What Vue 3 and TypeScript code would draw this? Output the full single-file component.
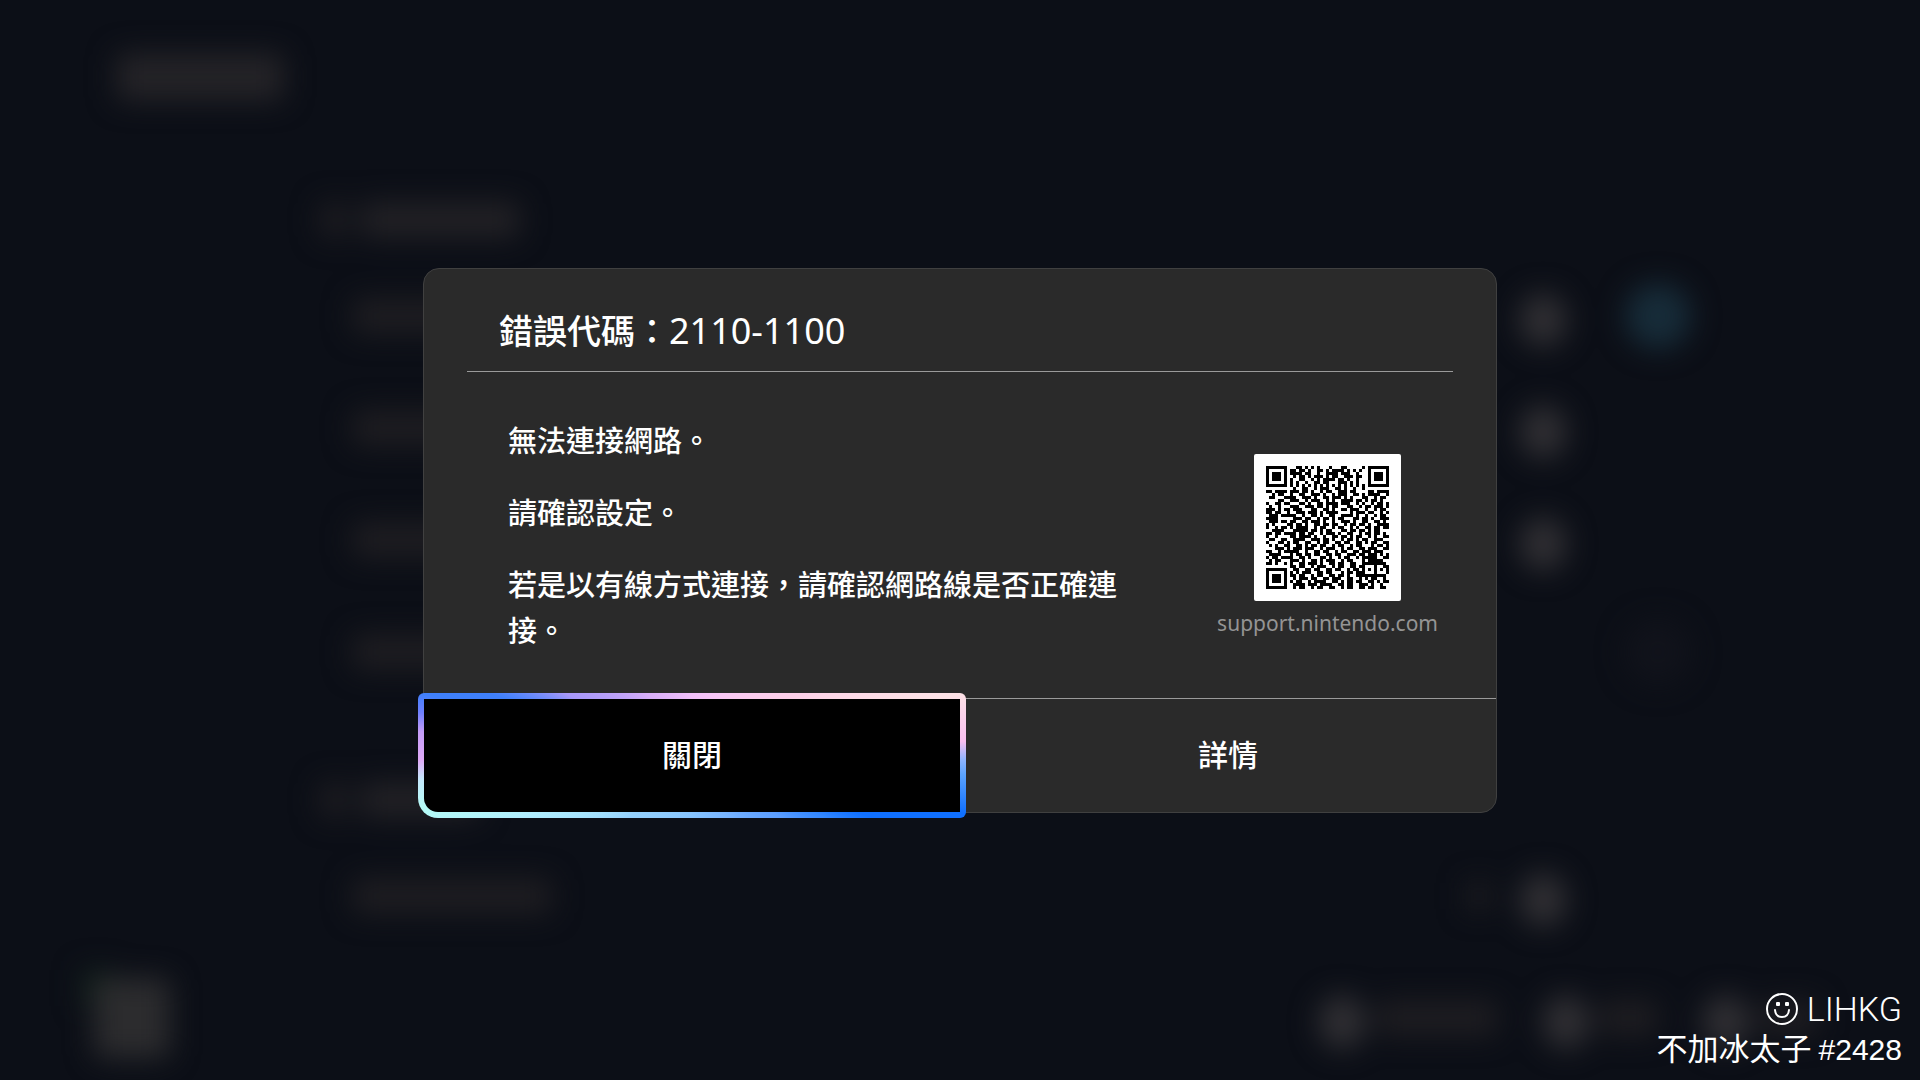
<script setup lang="ts">
const paragraphs: string[] = [
  '無法連接網路。',
  '請確認設定。',
  '若是以有線方式連接，請確認網路線是否正確連接。',
]

// QR code, version 6: 41 x 41 modules, "#" is a dark module.
const size = 41
const rows: string[] = [
  '........' + '..##.#.#.#...#...##.....#' + '........',
  '........' + '##.##.#..##.#.####.#.#.#.' + '........',
  '........' + '####.##..#..####.###..#..' + '........',
  '........' + '.#.##.#.###.#.##..###.##.' + '........',
  '........' + '#..##..#.#.####.##.#..#..' + '........',
  '........' + '#.#..#..##.##...###.#.#..' + '........',
  '........' + '.........................' + '........',
  '........' + '.#..##..#.###..##.#..#..#' + '........',
  '##.####.###.##.#..#.##..###.##....##.####',
  '..#.##..#..##..###.#..#.###..##.#.####..#',
  '.##...####..###.#..##.###.#.#...##..#.##.',
  '....##..###..#.###..#.#..####.##.#.##.#..',
  '#..##.##...##.#..##.####.###..#.#..#.##.#',
  '.#..#...###..###.##.#.##...##..#.##.###.#',
  '###.#.##.###...##..##.#..##.###..#..#.##.',
  '##.##..#..###.###.#.####....#.###.##..#.#',
  '.###.#.###..#..##.#..##..####.#..#..#.##.',
  '####..#..###.##..#.##.#.##...##.##.#..###',
  '.###.##.##..##.###.#..#..###.#..##..##.#.',
  '#.#...###.##.#..##.##.##..#.##.##.#..####',
  '#..#.#..#.####..#.##..#.##..#.#..##.##.##',
  '..#####..#####.##.#.##...##.##.##.#.##...',
  '##.##..###.##.##..#.###.#..##..#.##.##.#.',
  '#..#..#.##.####.#..#..##.##.#.##..#.#..##',
  '.##..#...####..###.##.#..#.##.#.##..###..',
  '#...####.##..##..#.##..##.##..##.#.##..##',
  '.#.#..##..##.#.##.##..#.##..#.##...#.##.#',
  '...###.#.###.###..#.###..#.##..##.###..##',
  '##..#..####..#..##.##..#.##..##.###.###..',
  '.####.#.#.##.##.##..##.##..###.##.###.#.#',
  '#.##.####..##.#...##.#..#.##..#.#####..##',
  '.#.##...###.#..##.#.###..#.##...#.#####..',
  '##.#..#.#..##.###.#..##.##..##..########.',
  '........' + '##.##..#.###..#.##..##.#.##....##',
  '........' + '.##..##.##..##.##..#.##..#.#..#.#',
  '........' + '#.#.###..##.##...#.##.##.#.##...#',
  '........' + '##.##..#.##..##.##.#..##..######.',
  '........' + '.#.###.##..##.###..##..#.#.##..#.',
  '........' + '#.##..#.####..##.#.##.##..##.#.##',
  '........' + '.####.###.####..##.##..###.#..#..',
  '........' + '.#.##..#.##..##..#.##..##.##..##.',
]

const ring = (r: number, c: number, row: number, col: number): number =>
  Math.max(Math.abs(r - row), Math.abs(c - col))

function isDark(r: number, c: number): boolean {
  // Finder patterns in three corners, each with a light separator.
  for (const [row, col] of [[3, 3], [3, size - 4], [size - 4, 3]]) {
    const d = ring(r, c, row, col)
    if (d <= 4) return d !== 2 && d !== 4
  }
  const align = ring(r, c, 34, 34)
  if (align <= 2) return align !== 1
  // Timing patterns.
  if (r === 6) return c % 2 === 0
  if (c === 6) return r % 2 === 0
  return rows[r][c] === '#'
}

let qrPath = ''
for (let r = 0; r < size; r++) {
  for (let c = 0; c < size; c++) {
    if (isDark(r, c)) qrPath += `M${c + 4} ${r + 4}h1v1h-1z`
  }
}
</script>

<template>
  <div class="stage">
    <div class="backdrop" aria-hidden="true">
      <div class="top"><i class="bar heading"></i></div>
      <div class="group first"><i class="bar mark"></i><i class="bar caption"></i></div>
      <div class="row"><i class="bar label"></i><i class="knob"></i><i class="dot blue"></i></div>
      <div class="row"><i class="bar label"></i><i class="knob"></i><i class="dot"></i></div>
      <div class="row"><i class="bar label"></i><i class="knob"></i><i class="dot"></i></div>
      <div class="row"><i class="bar label"></i><i class="knob none"></i><i class="dot faint"></i></div>
      <div class="group second"><i class="bar mark"></i><i class="bar caption"></i></div>
      <div class="row"><i class="bar label long"></i><i class="tick"></i><i class="knob"></i><i class="dot"></i></div>
      <div class="hints">
        <i class="pad"></i>
        <i class="knob"></i><i class="bar word wide"></i>
        <i class="knob"></i><i class="bar word"></i>
        <i class="knob"></i><i class="bar word"></i>
      </div>
    </div>

    <section class="dialog" role="alertdialog" aria-modal="true" aria-labelledby="dialog-title" aria-describedby="dialog-text">
      <header class="head">
        <h1 id="dialog-title">錯誤代碼：<span class="code">2110-1100</span></h1>
      </header>
      <div class="body">
        <div id="dialog-text" class="text">
          <p v-for="p in paragraphs" :key="p">{{ p }}</p>
        </div>
        <div class="support">
          <svg class="qr" viewBox="0 0 49 49" shape-rendering="crispEdges" role="img" aria-label="support.nintendo.com">
            <path :d="qrPath" />
          </svg>
          <a href="https://support.nintendo.com">support.nintendo.com</a>
        </div>
      </div>
      <footer class="actions">
        <button type="button" class="focused">關閉</button>
        <button type="button">詳情</button>
      </footer>
    </section>

    <div class="credit">
      <div class="brand">
        <svg viewBox="0 0 34 34" width="34" height="34" fill="none" stroke="#fff" stroke-width="2" stroke-linecap="round" aria-hidden="true">
          <circle cx="17" cy="17" r="15" />
          <path d="M10 18c.4 4.600 3.200 7 7 7s6.600-2.400 7-7" />
          <rect x="11" y="10" width="4" height="4" rx="1" fill="#fff" stroke="none" />
          <rect x="20" y="10" width="4" height="4" rx="1" fill="#fff" stroke="none" />
        </svg>
        <span>LIHKG</span>
      </div>
      <div class="user">不加冰太子 <span>#2428</span></div>
    </div>
  </div>
</template>

<style>
body {
  background: #0c0f17;
}
</style>

<style scoped>
.stage {
  position: relative;
  display: grid;
  place-items: center;
  min-height: 100vh;
  overflow: hidden;
  background: #0c0f17;
  color: #fff;
  font-family: "Noto Sans CJK TC", "Noto Sans", sans-serif;
}

.backdrop {
  position: absolute;
  inset: 0;
  display: flex;
  flex-direction: column;
  filter: blur(14px);
}
.top {
  display: flex;
  align-items: center;
  height: 154px;
  padding-left: 116px;
}
.bar {
  height: 36px;
  border-radius: 8px;
  background: #1e1d21;
}
.heading {
  width: 168px;
  height: 48px;
  background: #242327;
}
.group {
  display: flex;
  align-items: center;
  gap: 12px;
  box-sizing: border-box;
  padding-left: 320px;
}
.first {
  height: 106px;
  padding-top: 26px;
}
.second {
  height: 132px;
  padding-top: 52px;
}
.mark {
  width: 28px;
}
.caption {
  width: 160px;
  background: #222125;
}
.second .caption {
  width: 120px;
}
.row {
  display: flex;
  align-items: center;
  height: 112px;
  padding: 0 229px 0 352px;
}
.label {
  width: 110px;
  margin-right: auto;
}
.long {
  width: 200px;
}
.knob {
  width: 48px;
  height: 54px;
  margin-top: 8px;
  border-radius: 50%;
  background: #302f33;
}
.none {
  background: transparent;
}
.tick {
  width: 24px;
  height: 28px;
  margin-right: 28px;
  background: #1c1c20;
}
.dot {
  width: 66px;
  height: 66px;
  margin-left: 58px;
  border-radius: 50%;
}
.blue {
  background: #172c39;
}
.faint {
  background: #11131b;
}
.hints {
  display: flex;
  flex: 1;
  align-items: center;
  padding: 4px 58px 0 94px;
}
.pad {
  width: 76px;
  height: 80px;
  margin-right: auto;
  border-radius: 8px;
  background: #2c2c2e;
  box-shadow: -34px -30px 0 -22px #10201a;
}
.word {
  width: 58px;
  margin: 0 44px 0 10px;
}
.wide {
  width: 122px;
}

.dialog {
  position: relative;
  box-sizing: border-box;
  width: 1074px;
  max-width: 100%;
  border: 1px solid #404040;
  border-radius: 16px;
  background: #2a2a2a;
}
.head {
  margin: 0 43px;
  padding: 37px 32px 16px;
  border-bottom: 1px solid #9a9a9a;
}
h1 {
  margin: 0;
  font-size: 34px;
  font-weight: 500;
  line-height: 48px;
}
.code {
  font-family: "Noto Sans", sans-serif;
  font-size: 36px;
  font-weight: 400;
}
.body {
  display: flex;
  justify-content: space-between;
  padding: 44px 58px 46px 84px;
}
.text {
  display: flex;
  flex-direction: column;
  gap: 26px;
  width: 624px;
}
p {
  margin: 0;
  font-size: 29px;
  font-weight: 500;
  line-height: 46px;
}
.support {
  display: flex;
  flex-direction: column;
  align-items: center;
  padding-top: 38px;
}
.qr {
  width: 147px;
  height: 147px;
  border-radius: 2px;
  background: #fff;
}
.support a {
  margin-top: 6px;
  color: #949494;
  font-family: "Noto Sans", sans-serif;
  font-size: 21px;
  line-height: 32px;
  text-decoration: none;
}
.actions {
  display: flex;
  border-top: 1px solid #9a9a9a;
}
button {
  box-sizing: border-box;
  flex: 1;
  height: 113px;
  padding: 0 0 4px;
  border: 0;
  background: transparent;
  color: inherit;
  font: inherit;
  font-size: 30px;
  font-weight: 500;
}
.focused {
  box-sizing: content-box;
  height: 109px;
  margin: -6px;
  border: 6px solid transparent;
  border-radius: 6px 6px 6px 20px;
  background:
    linear-gradient(#000, #000) padding-box,
    conic-gradient(
      #f2c0fa 0deg,
      #f8c6f6 23deg,
      #fccfe8 60deg,
      #fde2e6 77deg,
      #f9bff0 87deg,
      #8cb4ff 91deg,
      #5ca4ff 94deg,
      #1070ff 102deg,
      #1070ff 109deg,
      #3488ff 115deg,
      #5c9eff 125deg,
      #78b4ff 150deg,
      #86c4ff 180deg,
      #94d0fc 225deg,
      #b0eeff 250deg,
      #b4fbf6 259deg,
      #c4e8fc 265deg,
      #dfaaf6 269deg,
      #c49cf8 275deg,
      #6f80ff 279deg,
      #3f80fb 283deg,
      #3f80fb 287deg,
      #a898fa 296deg,
      #d8aef8 324deg,
      #f2c0fa 360deg
    ) border-box;
}

.credit {
  position: absolute;
  right: 18px;
  bottom: 10px;
  display: flex;
  flex-direction: column;
  align-items: flex-end;
}
.brand {
  display: flex;
  align-items: center;
  gap: 8px;
  font-family: Roboto, sans-serif;
  font-size: 34px;
  font-weight: 300;
  line-height: 36px;
}
.user {
  font-size: 31px;
  line-height: 40px;
}
.user span {
  font-family: "Liberation Sans", sans-serif;
  font-size: 30px;
}
</style>
